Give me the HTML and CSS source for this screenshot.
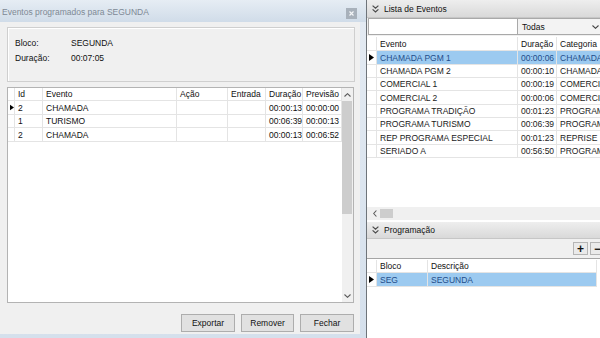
FILE: index.html
```html
<!DOCTYPE html>
<html>
<head>
<meta charset="utf-8">
<title>Eventos</title>
<link rel="stylesheet" href="styles.css">
</head>
<body>
<div class="dialog">
  <div class="titlebar">
    <span class="title">Eventos programados para SEGUNDA</span>
    <span class="close"><svg width="11" height="11" viewBox="0 0 11 11"><path d="M3.5 3.5 L7.5 7.5 M7.5 3.5 L3.5 7.5" stroke="#f4f6f8" stroke-width="1.2" fill="none"/></svg></span>
  </div>
  <div class="content">
    <div class="group">
      <div class="field"><span class="lbl">Bloco:</span><span>SEGUNDA</span></div>
      <div class="field"><span class="lbl">Duração:</span><span>00:07:05</span></div>
    </div>
    <div class="grid">
      <div class="gbody">
        <div class="row lrow head">
          <div class="cell"></div><div class="cell">Id</div><div class="cell">Evento</div><div class="cell">Ação</div><div class="cell">Entrada</div><div class="cell">Duração</div><div class="cell">Previsão</div>
        </div>
        <div class="row lrow data">
          <div class="cell ind"><svg width="5" height="7" viewBox="0 0 5 7"><polygon points="0,0 5,3.5 0,7" fill="#000"/></svg></div><div class="cell">2</div><div class="cell">CHAMADA</div><div class="cell"></div><div class="cell"></div><div class="cell">00:00:13</div><div class="cell">00:00:00</div>
        </div>
        <div class="row lrow data">
          <div class="cell ind"></div><div class="cell">1</div><div class="cell">TURISMO</div><div class="cell"></div><div class="cell"></div><div class="cell">00:06:39</div><div class="cell">00:00:13</div>
        </div>
        <div class="row lrow data">
          <div class="cell ind"></div><div class="cell">2</div><div class="cell">CHAMADA</div><div class="cell"></div><div class="cell"></div><div class="cell">00:00:13</div><div class="cell">00:06:52</div>
        </div>
      </div>
      <div class="vscroll">
        <div class="sbtn"><svg width="7" height="4" viewBox="0 0 7 4"><path d="M0.5 3.5 L3.5 0.7 L6.5 3.5" stroke="#5a5a5a" stroke-width="1.1" fill="none"/></svg></div>
        <div class="thumb"></div>
        <div class="track"></div>
        <div class="sbtn"><svg width="7" height="4" viewBox="0 0 7 4"><path d="M0.5 0.5 L3.5 3.3 L6.5 0.5" stroke="#5a5a5a" stroke-width="1.1" fill="none"/></svg></div>
      </div>
    </div>
    <div class="buttons">
      <div class="btn w54">Exportar</div>
      <div class="btn w53">Remover</div>
      <div class="btn w54">Fechar</div>
    </div>
  </div>
</div>

<div class="panel">
  <div class="phead">
    <svg width="7" height="8" viewBox="0 0 7 8"><path d="M0.6 0.6 L3.5 3.2 L6.4 0.6 M0.6 4.4 L3.5 7 L6.4 4.4" stroke="#4a4a4a" stroke-width="1.2" fill="none"/></svg>
    <span>Lista de Eventos</span>
  </div>
  <div class="filter">
    <div class="input"></div>
    <div class="combo"><span>Todas</span><svg width="7" height="4" viewBox="0 0 7 4"><path d="M0.5 0.5 L3.5 3.3 L6.5 0.5" stroke="#444" stroke-width="1.1" fill="none"/></svg></div>
  </div>
  <div class="lbody">
    <div class="row rrow head">
      <div class="cell"></div><div class="cell">Evento</div><div class="cell">Duração</div><div class="cell">Categoria</div>
    </div>
    <div class="row rrow data sel">
      <div class="cell ind"><svg width="5" height="7" viewBox="0 0 5 7"><polygon points="0,0 5,3.5 0,7" fill="#000"/></svg></div><div class="cell">CHAMADA PGM 1</div><div class="cell">00:00:06</div><div class="cell">CHAMADA</div>
    </div>
    <div class="row rrow data">
      <div class="cell ind"></div><div class="cell">CHAMADA PGM 2</div><div class="cell">00:00:10</div><div class="cell">CHAMADA</div>
    </div>
    <div class="row rrow data">
      <div class="cell ind"></div><div class="cell">COMERCIAL 1</div><div class="cell">00:00:19</div><div class="cell">COMERCIAL</div>
    </div>
    <div class="row rrow data">
      <div class="cell ind"></div><div class="cell">COMERCIAL 2</div><div class="cell">00:00:06</div><div class="cell">COMERCIAL</div>
    </div>
    <div class="row rrow data">
      <div class="cell ind"></div><div class="cell">PROGRAMA TRADIÇÃO</div><div class="cell">00:01:23</div><div class="cell">PROGRAMA</div>
    </div>
    <div class="row rrow data">
      <div class="cell ind"></div><div class="cell">PROGRAMA TURISMO</div><div class="cell">00:06:39</div><div class="cell">PROGRAMA</div>
    </div>
    <div class="row rrow data">
      <div class="cell ind"></div><div class="cell">REP PROGRAMA ESPECIAL</div><div class="cell">00:01:23</div><div class="cell">REPRISE</div>
    </div>
    <div class="row rrow data">
      <div class="cell ind"></div><div class="cell">SERIADO A</div><div class="cell">00:56:50</div><div class="cell">PROGRAMA</div>
    </div>
  </div>
  <div class="hscroll">
    <div class="hbtn"><svg width="4" height="7" viewBox="0 0 4 7"><path d="M3.4 0.5 L0.7 3.5 L3.4 6.5" stroke="#5a5a5a" stroke-width="1.1" fill="none"/></svg></div>
    <div class="hthumb"></div>
  </div>
  <div class="phead second">
    <svg width="7" height="8" viewBox="0 0 7 8"><path d="M0.6 0.6 L3.5 3.2 L6.4 0.6 M0.6 4.4 L3.5 7 L6.4 4.4" stroke="#4a4a4a" stroke-width="1.2" fill="none"/></svg>
    <span>Programação</span>
  </div>
  <div class="toolbar">
    <div class="tbtn">+</div>
    <div class="tbtn">−</div>
  </div>
  <div class="bbody">
    <div class="row brow head">
      <div class="cell"></div><div class="cell">Bloco</div><div class="cell">Descrição</div>
    </div>
    <div class="row brow data sel">
      <div class="cell ind"><svg width="5" height="7" viewBox="0 0 5 7"><polygon points="0,0 5,3.5 0,7" fill="#000"/></svg></div><div class="cell">SEG</div><div class="cell">SEGUNDA</div>
    </div>
  </div>
</div>
</body>
</html>
```
FILE: styles.css
```css
* { box-sizing: border-box; }
html, body { margin: 0; padding: 0; }
body {
  width: 600px;
  height: 338px;
  overflow: hidden;
  display: flex;
  font-family: "Liberation Sans", Arial, sans-serif;
  font-size: 8.5px;
  color: #111;
  background: #fff;
}

/* ---------- dialog ---------- */
.dialog {
  width: 366px;
  flex: none;
  height: 338px;
  display: flex;
  flex-direction: column;
  background: linear-gradient(180deg, #e4ebf3 0%, #d5e0ec 100%);
}
.titlebar {
  height: 22px;
  flex: none;
  display: flex;
  justify-content: space-between;
  align-items: flex-start;
  padding: 7px 9px 0 2px;
  background: linear-gradient(180deg, #e6edf4 0%, #d0dce9 100%);
}
.title { font-size: 8.5px; color: #7e8995; line-height: 11px; }
.close {
  width: 11px;
  height: 11px;
  margin-top: 1px;
  background: #a8b1bb;
  display: flex;
}
.content {
  flex: 1;
  margin: 0 6px 4px 0;
  background: #f0f0f0;
  padding: 5px 5px 0 7px;
  display: flex;
  flex-direction: column;
}
.group {
  height: 55px;
  border: 1px solid #cfcfcf;
  box-shadow: inset 1px 1px 0 #fff;
  padding: 8px 0 0 7px;
}
.field { display: flex; line-height: 15px; color: #111; }
.lbl { width: 56px; }

.grid {
  margin-top: 5px;
  width: 347px;
  height: 216px;
  border: 1px solid #b3b3b3;
  background: #fff;
  display: flex;
}
.gbody { flex: 1; }
.row { display: grid; }
.lrow { grid-template-columns: 7px 28px 134px 51px 38px 37px 39px; }
.lrow.head { height: 13px; }
.lrow.data { height: 13px; }
.lrow.data:nth-child(even) { height: 14px; }
.cell {
  border-right: 1px solid #e4e4e4;
  border-bottom: 1px solid #e4e4e4;
  padding-left: 3px;
  white-space: nowrap;
  overflow: hidden;
  display: flex;
  align-items: center;
}
.cell.ind { padding-left: 2px; }
.vscroll {
  width: 11px;
  flex: none;
  background: #f0f0f0;
  display: flex;
  flex-direction: column;
}
.sbtn { height: 13px; display: flex; align-items: center; justify-content: center; }
.thumb { height: 113px; background: #cdcdcd; margin: 0 1px 0 0; }
.track { flex: 1; }

.buttons {
  margin-top: 11px;
  margin-right: 1px;
  display: flex;
  justify-content: flex-end;
  gap: 6px;
}
.btn {
  height: 18px;
  border: 1px solid #adadad;
  background: #e1e1e1;
  display: flex;
  align-items: center;
  justify-content: center;
  color: #111;
}
.w54 { width: 54px; }
.w53 { width: 53px; }

/* ---------- right panel ---------- */
.panel {
  width: 240px;
  flex: none;
  border-left: 1px solid #6e747a;
  background: #fff;
  display: flex;
  flex-direction: column;
}
.phead {
  height: 18px;
  flex: none;
  display: flex;
  align-items: center;
  gap: 5px;
  padding-left: 5px;
  background: linear-gradient(180deg, #eeeeee 0%, #d9d9d9 100%);
  border-bottom: 1px solid #c6c6c6;
  color: #111;
}
.phead.second { height: 17px; margin-top: 2px; }
.filter {
  height: 18px;
  flex: none;
  display: flex;
  background: #f0f0f0;
  padding: 0 0 1px 1px;
}
.input { width: 150px; background: #fff; border: 1px solid #a9a9a9; }
.combo {
  flex: 1;
  border: 1px solid #a9a9a9;
  border-left: none;
  background: #f3f3f3;
  display: flex;
  align-items: center;
  justify-content: space-between;
  padding: 0 6px 0 4px;
  color: #111;
}
.lbody { height: 171px; flex: none; }
.rrow { grid-template-columns: 10px 141px 39px 120px; color: #1a1a1a; }
.rrow.head { height: 15px; border-top: 1px solid #fff; }
.rrow.data { height: 13px; }
.rrow.data:nth-child(3n+2) { height: 14px; }
.head .cell { color: #111; }
.sel .cell:not(.ind) { background: #9ccaf0; color: #1f4d8a; }
.hscroll {
  height: 13px;
  flex: none;
  display: flex;
  align-items: center;
  background: #f0f0f0;
}
.hbtn { width: 13px; display: flex; justify-content: center; padding-left: 2px; }
.hthumb { width: 13px; height: 9px; background: #cdcdcd; }
.toolbar {
  height: 20px;
  flex: none;
  background: #f0f0f0;
  border-bottom: 1px solid #a5a5a5;
  display: flex;
  justify-content: flex-end;
  align-items: center;
  gap: 2px;
  padding-right: 1px;
}
.tbtn {
  width: 15px;
  height: 13px;
  border: 1px solid #b5b5b5;
  background: #eaeaea;
  display: flex;
  align-items: center;
  justify-content: center;
  font-weight: bold;
  font-size: 12px;
  color: #111;
}
.bbody { flex: 1; }
.brow { grid-template-columns: 10px 51px 169px; color: #1a1a1a; }
.brow.head { height: 14px; border-top: 1px solid #fff; }
.brow.data { height: 14px; }
```
